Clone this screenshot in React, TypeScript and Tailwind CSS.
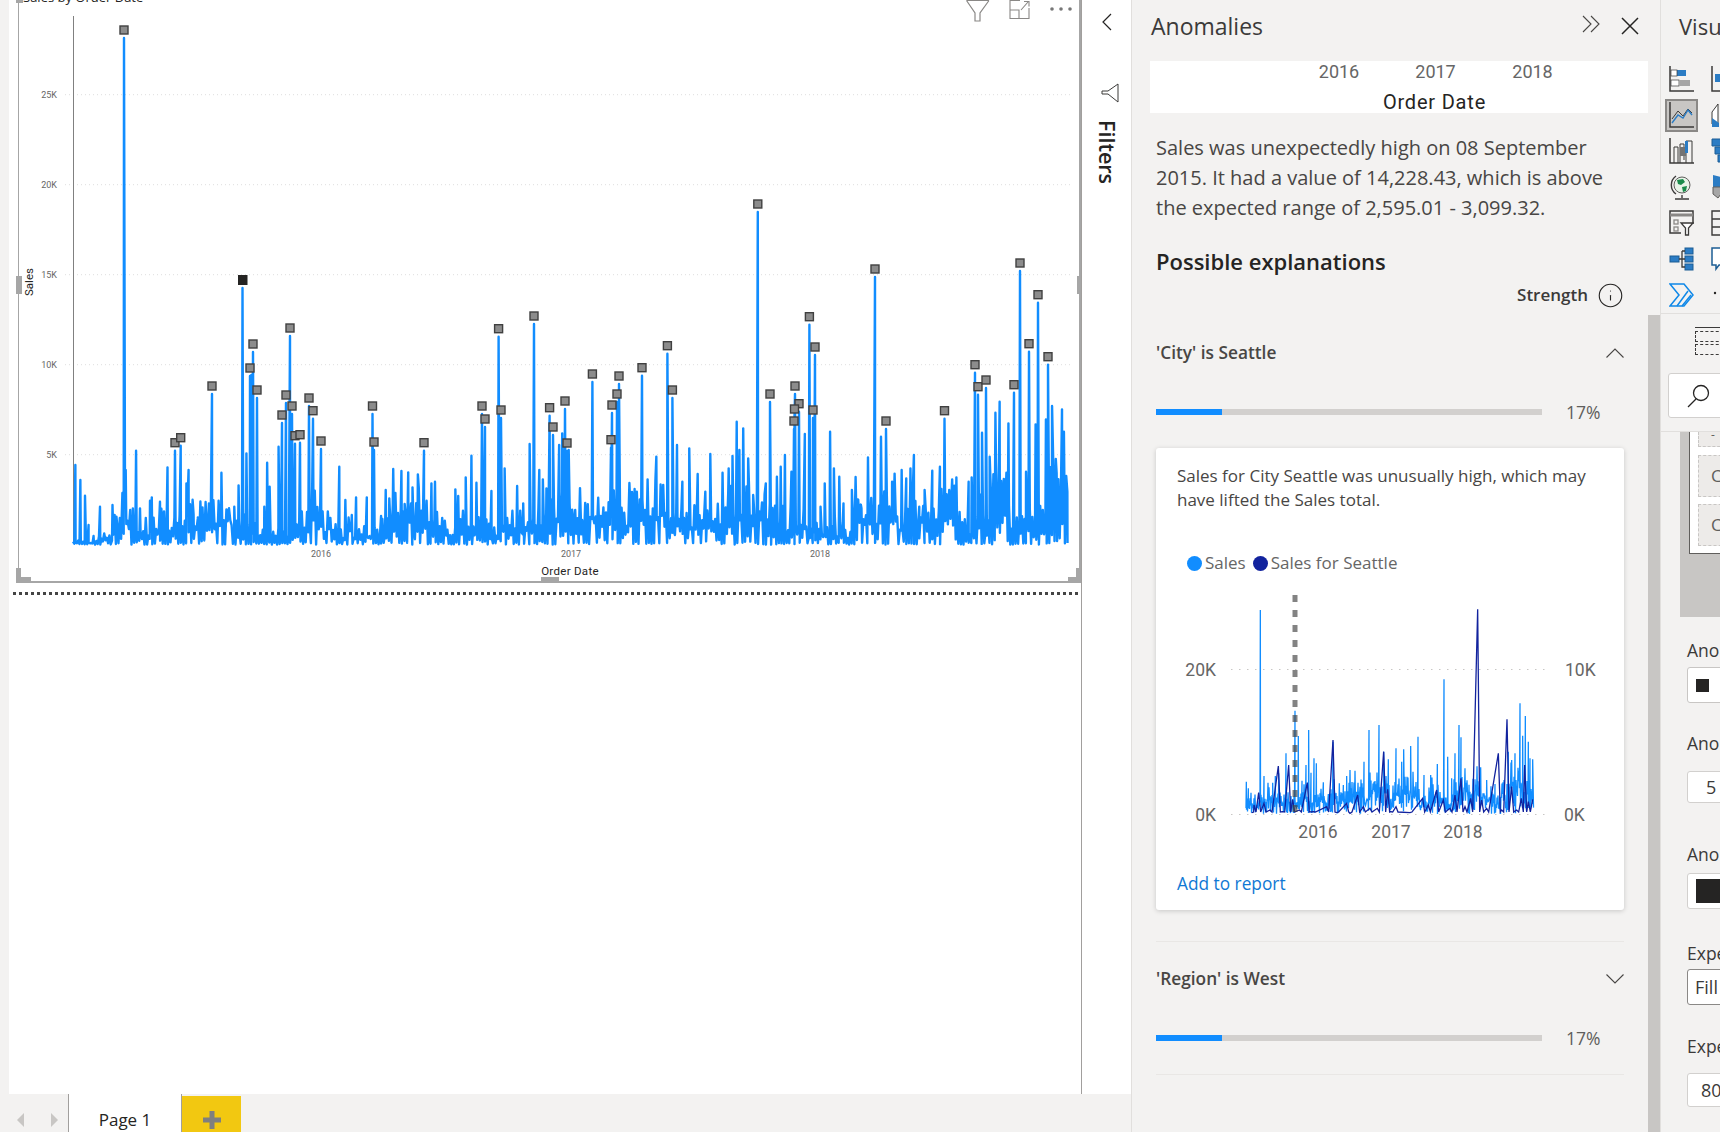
import { Info } from 'lucide-react';

type Pt = [number, number];

const BLUE = '#118dff';
const NAVY = '#12239e';

// main chart: 90px per 5K, baseline at y=544.7
const BASE = 544.7;

const markers: Pt[] = [
  [124, 30], [175, 442.7], [180.7, 437.7], [212, 386], [253, 344], [250, 368], [257, 390], [290, 328], [286, 395],
  [292, 406], [282, 415], [309, 398], [313, 410.7], [295, 435.7], [300, 434.7], [321, 441], [372.5, 406], [374, 442],
  [424, 442.7], [482, 406], [485, 419], [498.6, 328.7], [501, 410], [534, 316], [549.6, 407.7], [553, 427], [565, 401],
  [567, 443], [592.4, 374], [611, 439.7], [612, 405], [617, 394], [619, 376], [642, 367.7], [667.4, 345.7], [672.4, 390],
  [757.8, 204], [770, 394], [795, 386], [799, 403.7], [794.5, 409], [794, 421], [809.4, 316.7], [813, 410], [815, 347],
  [875, 269], [886, 421], [944.5, 410.7], [975, 364.7], [978, 386.7], [986, 380], [1014, 384.7], [1020, 263], [1029, 343.7],
  [1038, 294.7], [1048, 356.7],
];

// peaks read off the left half of the plot
const leftPeaks: Pt[] = [
  [211, 525], [225, 570], [238, 617], [248, 705], [262, 738], [280, 650], [315, 645], [326, 680], [352, 540], [381, 482], [372, 655],
  [392, 655], [420, 632], [425, 622], [448, 635], [469, 532], [522, 580], [528, 540], [542, 672], [554, 682], [567, 652],
  [585, 640], [620, 548], [612, 640], [640, 660], [656, 650], [668, 586], [690, 490], [704, 255], [748, 518], [755, 590],
  [740, 650], [780, 470], [950, 530], [967, 630], [985, 675], [997, 622], [1027, 622], [1067, 678], [1080, 600], [1090, 625],
  [1101, 537], [1124, 543], [1133, 642], [1143, 547], [1155, 592], [1170, 553], [1208, 580], [1218, 575], [1275, 598], [1283, 618],
  [1304, 562], [1320, 497], [1334, 578], [1376, 603], [1413, 535], [1448, 588], [1465, 640], [1483, 462], [1510, 540], [1520, 568],
  [1530, 595],
];

// and the right half
const rightPeaks: Pt[] = [
  [50, 465], [58, 430], [75, 480], [92, 660], [110, 690], [119, 668], [150, 685], [171, 680], [235, 618], [242, 645], [253, 605],
  [283, 670], [304, 500], [358, 465], [372, 575], [390, 475], [412, 552], [432, 605], [445, 492], [477, 548], [493, 535], [503, 498],
  [514, 395], [521, 480], [531, 415], [544, 505], [557, 615], [590, 580], [619, 560], [629, 530], [640, 495], [657, 545], [692, 432],
  [733, 650], [744, 580], [758, 425], [768, 535], [782, 560], [793, 640], [815, 600], [830, 628], [840, 655], [857, 502], [891, 440],
  [920, 575], [945, 540], [957, 565], [968, 535], [977, 495], [991, 650], [1005, 600], [1025, 542], [1045, 530], [1077, 568], [1088, 562],
  [1120, 575], [1128, 562], [1155, 428], [1175, 500], [1190, 368], [1201, 335], [1224, 400], [1270, 545], [1295, 403], [1322, 388],
  [1338, 348], [1350, 550], [1364, 358], [1369, 425], [1378, 605],
];

const miniBlue: Pt[] = [
  [199, 575], [205, 595], [222, 625], [241, 60], [252, 558], [265, 615], [278, 578], [286, 558], [296, 550], [318, 490], [345, 362], [355, 438],
  [366, 572], [378, 525], [386, 420], [393, 548], [402, 505], [409, 520], [430, 577], [445, 612], [459, 455], [478, 580], [490, 585], [500, 558],
  [512, 595], [530, 605], [540, 590], [552, 515], [567, 420], [580, 590], [597, 405], [611, 485], [625, 508], [648, 475], [665, 515], [671, 478],
  [692, 468], [714, 440], [732, 555], [752, 555], [772, 522], [792, 268], [803, 500], [815, 565], [825, 490], [837, 405], [843, 442], [855, 535],
  [870, 605], [885, 568], [902, 532], [920, 570], [945, 582], [970, 590], [985, 485], [995, 510], [1005, 490], [1020, 340], [1028, 437], [1036, 378],
  [1045, 455], [1050, 505], [1058, 508],
];

const miniNavy: Pt[] = [
  [215, 668], [222, 645], [236, 608], [252, 640], [270, 660], [295, 528], [308, 665], [326, 525], [338, 628], [358, 660], [382, 578], [400, 665],
  [440, 650], [459, 450], [470, 668], [500, 640], [510, 670], [533, 615], [550, 650], [570, 655], [592, 655], [611, 485], [623, 598], [632, 665],
  [648, 650], [690, 668], [728, 625], [745, 645], [770, 600], [790, 630], [810, 655], [825, 615], [843, 565], [855, 650], [872, 625], [893, 58],
  [905, 630], [920, 655], [955, 490], [965, 660], [981, 388], [995, 590], [1010, 660], [1024, 625], [1034, 525], [1045, 635], [1058, 628],
];

function rng(seed: number) {
  let s = seed;
  return () => {
    s = (s * 16807) % 2147483647;
    return s / 2147483647;
  };
}

function mainAmp(x: number) {
  if (x < 112) return 12;
  if (x < 300) return 62;
  if (x < 960) return 72;
  return 115;
}

function buildMain() {
  const r = rng(4711);
  const peaks: Pt[] = [
    ...markers.map(([x, y]): Pt => [x, y + 8]),
    [242.5, 288],
    ...leftPeaks.map(([x, y]): Pt => [x / 2.8, 290 + y / 3]),
    ...rightPeaks.map(([x, y]): Pt => [540 + x / 2.613, 290 + y / 3]),
  ];
  const pts: Pt[] = peaks.filter(([x]) => x > 70 && x < 1069);
  let flip = false;
  let burst = 0.5;
  for (let x = 73; x < 1068; x += 1.3) {
    flip = !flip;
    burst = Math.min(1, Math.max(0.25, burst + (r() - 0.5) * 0.35));
    const a = mainAmp(x);
    let v = a * burst * (0.35 + 0.65 * Math.pow(r(), 1.2));
    if (!flip) v = r() < 0.4 ? r() * 2 : a * burst * 0.4 * r();
    pts.push([x, BASE - v]);
  }
  pts.sort((p, q) => p[0] - q[0]);
  return pts.map((p) => p.join(',')).join(' ');
}

function buildMini() {
  const r = rng(99);
  const pts: Pt[] = miniBlue.map(([x, y]): Pt => [1180 + x / 3, 590 + y / 3]);
  let flip = false;
  let burst = 0.6;
  for (let x = 1246; x < 1534; x += 0.5) {
    flip = !flip;
    burst = Math.min(1, Math.max(0.35, burst + (r() - 0.5) * 0.3));
    const a = x > 1500 ? 75 : x < 1300 ? 32 : 50;
    pts.push([x, 814 - (flip ? a * burst * (0.4 + 0.6 * Math.pow(r(), 1.1)) : a * burst * 0.6 * r())]);
  }
  pts.sort((p, q) => p[0] - q[0]);
  return pts.map((p) => p.join(',')).join(' ');
}

function buildNavy() {
  const pts: Pt[] = [];
  miniNavy.forEach(([x, y], i) => {
    pts.push([1180 + x / 3, 590 + y / 3]);
    if (i < miniNavy.length - 1) pts.push([1180 + (x + 6) / 3, 812]);
  });
  return pts.map((p) => p.join(',')).join(' ');
}

const mainLine = buildMain();
const miniLine = buildMini();
const navyLine = buildNavy();

function MainChart() {
  const din = { fontFamily: 'Roboto, sans-serif' };
  return (
    <svg width="1060" height="581" viewBox="19 0 1060 581" className="block">
      <text x="23" y="2" fontSize="13" fill="#252423" style={{ fontFamily: 'Open Sans, sans-serif' }}>Sales by Order Date</text>
      {[94.7, 184.7, 274.7, 364.7, 454.7].map((y) => (
        <line key={y} x1="65" x2="1072" y1={y} y2={y} stroke="#dedede" strokeDasharray="1 3" />
      ))}
      {[['25K', 94.7], ['20K', 184.7], ['15K', 274.7], ['10K', 364.7], ['5K', 454.7]].map(([t, y]) => (
        <text key={t} x="57" y={Number(y) + 3} textAnchor="end" fontSize="9" fill="#666666" style={din}>{t}</text>
      ))}
      <line x1="73.5" x2="73.5" y1="16" y2="544" stroke="#808080" />
      <polyline points={mainLine} fill="none" stroke={BLUE} strokeWidth="2.4" strokeLinejoin="round" />
      {markers.map(([x, y]) => (
        <rect key={`${x}-${y}`} x={x - 4} y={y - 4} width="8" height="8" fill="#8c8c8c" stroke="#404040" strokeWidth="1.4" />
      ))}
      <rect x="238" y="275" width="9.5" height="10" fill="#252423" />
      <text x="321" y="557" textAnchor="middle" fontSize="9" fill="#666666" style={din}>2016</text>
      <text x="571" y="557" textAnchor="middle" fontSize="9" fill="#666666" style={din}>2017</text>
      <text x="820" y="557" textAnchor="middle" fontSize="9" fill="#666666" style={din}>2018</text>
      <text x="570" y="575" textAnchor="middle" fontSize="11.5" letterSpacing="0.3" fill="#252423" style={din}>Order Date</text>
      <text transform="translate(33 296) rotate(-90)" fontSize="11.5" fill="#252423" style={din}>Sales</text>
    </svg>
  );
}

function MiniChart() {
  const din = { fontFamily: 'Roboto, sans-serif' };
  return (
    <svg width="468" height="260" viewBox="1156 590 468 260" className="block">
      <line x1="1231" x2="1550" y1="669.5" y2="669.5" stroke="#c8c6c4" strokeDasharray="1.5 6.5" />
      <line x1="1231" x2="1550" y1="814.5" y2="814.5" stroke="#c8c6c4" strokeDasharray="1.5 6.5" />
      <polyline points={miniLine} fill="none" stroke={BLUE} strokeWidth="1.3" />
      <polyline points={navyLine} fill="none" stroke={NAVY} strokeWidth="1.3" />
      <line x1="1295" x2="1295" y1="595" y2="814" stroke="#404040" strokeOpacity="0.65" strokeWidth="5" strokeDasharray="7 8" />
      <text x="1216" y="676" textAnchor="end" fontSize="17.5" fill="#666666" style={din}>20K</text>
      <text x="1216" y="821" textAnchor="end" fontSize="17.5" fill="#666666" style={din}>0K</text>
      <text x="1565" y="676" fontSize="17.5" fill="#666666" style={din}>10K</text>
      <text x="1564" y="821" fontSize="17.5" fill="#666666" style={din}>0K</text>
      <text x="1318" y="838" textAnchor="middle" fontSize="17.5" fill="#666666" style={din}>2016</text>
      <text x="1391" y="838" textAnchor="middle" fontSize="17.5" fill="#666666" style={din}>2017</text>
      <text x="1463" y="838" textAnchor="middle" fontSize="17.5" fill="#666666" style={din}>2018</text>
    </svg>
  );
}

function Bar() {
  return (
    <div className="mt-[31px] flex h-[24px] items-center">
      <div className="h-[6px] w-[386px] bg-[#d2d0ce]">
        <div className="h-[6px] w-[66px] bg-[#118dff]" />
      </div>
      <span className="ml-[24px] text-[17.5px] text-[#605e5c]">17%</span>
    </div>
  );
}

function Chevron({ up }: { up?: boolean }) {
  return (
    <svg width="18" height="10" viewBox="0 0 18 10" fill="none" stroke="#484644" strokeWidth="1.1">
      <path d={up ? 'M0.5 9.5L9 1l8.5 8.5' : 'M0.5 0.5L9 9l8.5-8.5'} />
    </svg>
  );
}

// the narrow column of visual icons; the second column is clipped by the window
const ink = '#3b3a39';
const iconBlue = '#2b7cc4';

function IconBarChart() {
  return (
    <svg width="25" height="26" viewBox="0 0 25 26" fill="none">
      <path d="M1 0v25h24" stroke={ink} strokeWidth="1.5" />
      <rect x="8" y="4" width="9" height="6" fill={iconBlue} />
      <rect x="2" y="4" width="6" height="6" fill="#fff" stroke={ink} strokeWidth="0.7" />
      <rect x="2" y="14" width="8" height="6" fill="#fff" stroke={ink} strokeWidth="0.7" />
      <rect x="10" y="14" width="11" height="6" fill="#a6a6a6" />
    </svg>
  );
}

function IconLine() {
  return (
    <svg width="25" height="26" viewBox="0 0 25 26" fill="none">
      <path d="M1 0v25h24" stroke={ink} strokeWidth="1.5" />
      <path d="M3 17l6-8 5 5 5-7 4 4" stroke={ink} strokeWidth="1" />
      <path d="M3 21l6-8 5 3 5-8 4 5" stroke={iconBlue} strokeWidth="1.4" />
    </svg>
  );
}

function IconRibbon() {
  return (
    <svg width="25" height="26" viewBox="0 0 25 26" fill="none">
      <path d="M1 0v25h24" stroke={ink} strokeWidth="1.5" />
      <path d="M5 25V9h4v16M11 25V6h4v16M17 25V3h6v22" stroke={ink} strokeWidth="1" />
      <rect x="11" y="9" width="6" height="9" fill="#737373" />
      <rect x="16" y="3" width="3" height="12" fill={iconBlue} />
    </svg>
  );
}

function IconGlobe() {
  return (
    <svg width="25" height="26" viewBox="0 0 25 26" fill="none">
      <circle cx="13" cy="11" r="8" fill="#e8f3e8" stroke="#605e5c" />
      <path d="M8 6l6-1 2 3-4 3-3-1zM13 13l5-1-1 5-3 1z" fill="#1a8a4a" />
      <path d="M7 2a11 11 0 0 0 0 18" stroke={ink} strokeWidth="1.4" />
      <path d="M13 21v3M6 25h14" stroke={ink} strokeWidth="1.4" />
    </svg>
  );
}

function IconSlicer() {
  return (
    <svg width="25" height="26" viewBox="0 0 25 26" fill="none">
      <path d="M24 14V1H1v22h11" stroke={ink} strokeWidth="1.5" />
      <path d="M1 5h23" stroke="#8a8886" strokeWidth="3" />
      <rect x="5" y="10" width="4" height="4" stroke="#8a8886" strokeWidth="1.3" />
      <rect x="5" y="17" width="4" height="4" stroke="#8a8886" strokeWidth="1.3" />
      <path d="M12 13h12l-4.500 5v7h-3v-7z" fill="#fff" stroke={ink} strokeWidth="1.3" />
    </svg>
  );
}

function IconTree() {
  return (
    <svg width="25" height="26" viewBox="0 0 25 26" fill="none">
      <rect x="1" y="10" width="9" height="6" fill={iconBlue} stroke="#1c5d94" />
      <rect x="16" y="2" width="8" height="6" fill={iconBlue} stroke="#1c5d94" />
      <rect x="16" y="10" width="8" height="6" fill={iconBlue} stroke="#1c5d94" />
      <rect x="16" y="18" width="8" height="6" fill={iconBlue} stroke="#1c5d94" />
      <path d="M10 13h6M13 5v16h3M13 5h3" stroke={ink} strokeWidth="1.3" />
    </svg>
  );
}

function IconAutomate() {
  return (
    <svg width="25" height="26" viewBox="0 0 25 26" fill="none" stroke="#0f88e8" strokeWidth="1.5">
      <path d="M1 2h14l9 11-9 11H1l9-11z" />
      <path d="M8 24L19 9M13 24L22 13" />
    </svg>
  );
}

function Clip2({ kind }: { kind: number }) {
  const paths = [
    <g key="0"><path d="M1 0v25h24" stroke={ink} strokeWidth="1.5" fill="none" /><rect x="4" y="8" width="6" height="8" fill={iconBlue} /></g>,
    <g key="1"><path d="M1 10l6-8v20H1z" fill="#fff" stroke={ink} /><path d="M1 16l7 5v4H1z" fill={iconBlue} /></g>,
    <path key="2" d="M1 1h10v7H1zM4 9h8v7H4zM7 17h6v7H7z" fill={iconBlue} stroke="#1c5d94" />,
    <g key="3"><path d="M2 1l8 2v10H2z" fill={iconBlue} /><path d="M2 13h8v7l-3 4-5-4z" fill="#a6a6a6" stroke="#605e5c" /></g>,
    <path key="4" d="M1 1h24v24H1zM1 9h24M1 17h24" fill="none" stroke={ink} strokeWidth="1.4" />,
    <path key="5" d="M1 2h20v17H8l-3 4v-4H1z" fill="#fff" stroke="#1c5d94" strokeWidth="1.5" />,
    <circle key="6" cx="4" cy="11" r="1.2" fill="#252423" />,
  ];
  return (
    <svg width="25" height="26" viewBox="0 0 25 26" className="shrink-0">
      {paths[kind]}
    </svg>
  );
}

const iconRows = [IconBarChart, IconLine, IconRibbon, IconGlobe, IconSlicer, IconTree, IconAutomate];

function FieldBox({ label }: { label: string }) {
  return (
    <div className="flex h-[42px] w-[60px] items-center border border-dashed border-[#c8c6c4] bg-[#edebe9] pl-[12px] text-[17px] text-[#605e5c]">
      {label}
    </div>
  );
}

function VisualizationsPane() {
  return (
    <div className="flex h-full w-[60px] flex-col overflow-hidden border-l border-[#e1dfdd] bg-[#f3f2f1] text-[#3b3a39]">
      <div className="flex h-[52px] w-[200px] shrink-0 items-center pl-[18px] text-[22px] font-medium whitespace-nowrap">
        Visualizations
      </div>
      <div className="mt-[9px] flex w-[120px] shrink-0 flex-col">
        {iconRows.map((Icon, i) => (
          <div key={i} className="flex h-[36px] items-center pl-[4px]">
            <div className={`flex h-[33px] w-[33px] items-center justify-center ${i === 1 ? 'border-2 border-[#8a8886] bg-[#c8c6c4]' : ''}`}>
              <Icon />
            </div>
            <div className="ml-[13px]">
              <Clip2 kind={i} />
            </div>
          </div>
        ))}
      </div>
      <div className="h-[1px] w-full shrink-0 bg-[#e1dfdd]" />
      <div className="ml-[34px] mt-[13px] h-[29px] w-[60px] shrink-0 border-t border-[#3b3a39] pt-[3px]">
        <div className="h-[11px] border border-dashed border-[#3b3a39]" />
        <div className="mt-[2px] h-[11px] border border-dashed border-[#3b3a39]" />
      </div>
      <div className="ml-[7px] mt-[17px] flex h-[45px] w-[80px] shrink-0 items-center rounded-[3px] border border-[#d2d0ce] bg-white pl-[17px]">
        <svg width="24" height="24" viewBox="0 0 24 24" fill="none" stroke="#252423" strokeWidth="1.3">
          <circle cx="15" cy="9" r="7.500" />
          <path d="M10 15L2 23" />
        </svg>
      </div>
      <div className="mt-[13px] h-[1px] w-full shrink-0 bg-[#e1dfdd]" />
      <div className="ml-[19px] h-[185px] w-[60px] shrink-0 bg-[#c8c6c4] pl-[9px]">
        <div className="h-[122px] w-[60px] border-b border-l border-[#605e5c] bg-white pl-[8px]">
          <div className="h-[15px] border border-t-0 border-dashed border-[#c8c6c4] bg-[#edebe9] pl-[12px] text-[12px] leading-[6px] text-[#605e5c]">-</div>
          <div className="mt-[8px]"><FieldBox label="C" /></div>
          <div className="mt-[7px]"><FieldBox label="C" /></div>
        </div>
      </div>
      <div className="ml-[26px] mt-[22px] shrink-0 text-[17.5px] leading-[22px]">Anomaly</div>
      <div className="ml-[26px] mt-[6px] flex h-[36px] w-[60px] shrink-0 items-center rounded-[3px] border border-[#c8c6c4] bg-white pl-[8px]">
        <div className="h-[13px] w-[13px] bg-[#252423]" />
      </div>
      <div className="ml-[26px] mt-[29px] shrink-0 text-[17.5px] leading-[22px]">Anomaly</div>
      <div className="ml-[26px] mt-[17px] flex h-[32px] w-[60px] shrink-0 items-center rounded-[3px] border border-[#d2d0ce] bg-white pl-[18px] text-[18px]">5</div>
      <div className="ml-[26px] mt-[40px] shrink-0 text-[17.5px] leading-[22px]">Anomaly</div>
      <div className="ml-[26px] mt-[8px] flex h-[36px] w-[60px] shrink-0 items-center rounded-[3px] border border-[#d2d0ce] bg-white pl-[8px]">
        <div className="h-[24px] w-[30px] bg-[#252423]" />
      </div>
      <div className="ml-[26px] mt-[33px] shrink-0 text-[17.5px] leading-[22px]">Expected</div>
      <div className="ml-[26px] mt-[5px] flex h-[36px] w-[60px] shrink-0 items-center rounded-[3px] border border-[#8a8886] bg-white pl-[7px] text-[18px]">Fill</div>
      <div className="ml-[26px] mt-[30px] shrink-0 text-[17.5px] leading-[22px]">Expected</div>
      <div className="ml-[26px] mt-[16px] flex h-[34px] w-[60px] shrink-0 items-center rounded-[3px] border border-[#d2d0ce] bg-white pl-[13px] text-[18px]">80</div>
    </div>
  );
}

function AnomaliesPane() {
  return (
    <div className="flex h-full w-[529px] border-l border-[#e1dfdd] bg-[#f3f2f1]">
      <div className="w-[516px]">
        <div className="flex h-[54px] items-center pl-[19px]">
          <span className="-mt-[2px] w-[431px] text-[23px] font-medium text-[#3b3a39]">Anomalies</span>
          <svg width="18" height="18" viewBox="0 0 18 18" fill="none" stroke="#484644" strokeWidth="1.1" className="-mt-[7px]">
            <path d="M1 1l8 8-8 8M9 1l8 8-8 8" />
          </svg>
          <svg width="18" height="18" viewBox="0 0 18 18" fill="none" stroke="#252423" strokeWidth="1.5" className="-mt-[2px] ml-[21px]">
            <path d="M1 1l16 16M17 1L1 17" />
          </svg>
        </div>
        <div className="mt-[7px] ml-[18px] h-[52px] w-[498px] bg-white font-['Roboto',sans-serif]">
          <div className="flex pl-[141px] text-[18px] leading-[22px] text-[#666666]">
            <span className="w-[96px] text-center">2016</span>
            <span className="w-[97px] text-center">2017</span>
            <span className="w-[97px] text-center">2018</span>
          </div>
          <div className="mt-[7px] pl-[71px] text-center text-[20px] leading-[24px] tracking-[0.8px] text-[#252423]">Order Date</div>
        </div>
        <p className="mt-[20px] ml-[24px] text-[20px] leading-[30px] text-[#484644]">
          Sales was unexpectedly high on 08 September
          <br />
          2015. It had a value of 14,228.43, which is above
          <br />
          the expected range of 2,595.01 - 3,099.32.
        </p>
        <h2 className="mt-[18px] ml-[24px] h-[41px] text-[22px] leading-[40px] font-semibold text-[#252423]">Possible explanations</h2>
        <div className="flex h-[26px] items-center justify-end pr-[24px]">
          <span className="text-[17px] font-semibold text-[#3b3a39]">Strength</span>
          <Info size={27} strokeWidth={1} color="#252423" className="ml-[9px]" />
        </div>
        <div className="mt-[28px] ml-[24px] w-[468px]">
          <div className="flex h-[33px] items-center justify-between">
            <span className="text-[17.3px] font-semibold text-[#484644]">'City' is Seattle</span>
            <Chevron up />
          </div>
          <Bar />
          <div className="mt-[24px] h-[462px] w-[468px] rounded-[3px] bg-white shadow-[0_1px_5px_rgba(0,0,0,0.18)]">
            <p className="pt-[16px] pl-[21px] text-[17px] leading-[24px] text-[#484644]">
              Sales for City Seattle was unusually high, which may
              <br />
              have lifted the Sales total.
            </p>
            <div className="mt-[39px] flex h-[24px] items-center pl-[31px] text-[17px] text-[#666666]">
              <span className="h-[15px] w-[15px] rounded-full bg-[#118dff]" />
              <span className="ml-[3px]">Sales</span>
              <span className="ml-[7px] h-[15px] w-[15px] rounded-full bg-[#12239e]" />
              <span className="ml-[3px]">Sales for Seattle</span>
            </div>
            <div className="mt-[15px]">
              <MiniChart />
            </div>
            <div className="mt-[22px] pl-[21px] text-[17.3px] leading-[24px] text-[#0f78d4]">Add to report</div>
          </div>
          <div className="mt-[31px] h-[1px] bg-[#e9e7e5]" />
          <div className="mt-[21px] flex h-[32px] items-center justify-between">
            <span className="text-[17.3px] font-semibold text-[#484644]">'Region' is West</span>
            <Chevron />
          </div>
          <Bar />
          <div className="mt-[24px] h-[1px] bg-[#e9e7e5]" />
        </div>
      </div>
      <div className="mt-[315px] w-[12px] bg-[#c8c6c4]" />
    </div>
  );
}

function FilterPane() {
  return (
    <div className="flex w-[49px] flex-col items-start bg-white pl-[14px]">
      <svg width="12" height="18" viewBox="0 0 12 18" fill="none" stroke="#252423" strokeWidth="1.2" className="mt-[13px] ml-[5px]">
        <path d="M10 1L2 9l8 8" />
      </svg>
      <svg width="18" height="20" viewBox="0 0 18 20" fill="none" stroke="#3b3a39" strokeWidth="1" className="mt-[52px] ml-[5px]">
        <path d="M17 1v18L7 11H1V8h6z" />
      </svg>
      <span className="mt-[17px] font-semibold text-[21.5px] leading-[22px] text-[#252423] [writing-mode:vertical-rl]">Filters</span>
    </div>
  );
}

export default function App() {
  return (
    <div className="flex h-[1132px] w-[1720px] overflow-hidden bg-white font-['Open_Sans',sans-serif]">
      <div className="flex h-full w-[1131px] flex-col">
        <div className="flex h-[1094px]">
          <div className="w-[9px] bg-[#f3f2f1]" />
          <div className="w-[1073px] border-r border-[#a19f9d] bg-white">
            <div className="relative ml-[9px] h-[583px] w-[1063px] border-r-2 border-b-2 border-l border-[#a6a6a6]">
              <MainChart />
              <div className="absolute top-0 -left-[3px] h-[3px] w-[7px] bg-[#a6a6a6]" />
              <div className="absolute top-[276px] -left-[3px] h-[18px] w-[6px] bg-[#a6a6a6]" />
              <div className="absolute top-[276px] -right-[2px] h-[18px] w-[4px] bg-[#a6a6a6]" />
              <div className="absolute -bottom-[2px] -left-[3px] h-[15px] w-[5px] bg-[#a6a6a6]" />
              <div className="absolute -bottom-[2px] -left-[3px] h-[6px] w-[15px] bg-[#a6a6a6]" />
              <div className="absolute -right-[2px] -bottom-[2px] h-[15px] w-[5px] bg-[#a6a6a6]" />
              <div className="absolute -right-[2px] -bottom-[2px] h-[6px] w-[13px] bg-[#a6a6a6]" />
              <div className="absolute -bottom-[2px] left-[522px] h-[6px] w-[18px] bg-[#a6a6a6]" />
              <svg width="108" height="22" viewBox="0 0 108 22" fill="none" className="absolute top-0 left-[947px]">
                <path d="M0.500 0.500H23M0.500 0.500L9 13v8h5v-8L23 0.500" stroke="#8a8886" strokeWidth="1.2" />
                <path d="M63 8V18.500H44V0.500h10M44 10h9v8.500M55 10l7-8M58 1.500h5v5" stroke="#8a8886" strokeWidth="1.1" />
                <circle cx="86" cy="9" r="1.800" fill="#777777" />
                <circle cx="95" cy="9" r="1.800" fill="#777777" />
                <circle cx="104" cy="9" r="1.800" fill="#777777" />
              </svg>
            </div>
            <div className="mt-[9px] ml-[4px] h-[3px] w-[1066px] bg-[repeating-linear-gradient(90deg,#444444_0_3px,transparent_3px_6px)]" />
          </div>
          <FilterPane />
        </div>
        <div className="flex h-[38px] bg-[#f3f2f1] pl-[9px]">
          <div className="flex w-[59px] items-start gap-[27px] pt-[19px] pl-[8px]">
            <div className="h-0 w-0 border-y-[7px] border-r-[7px] border-y-transparent border-r-[#c8c6c4]" />
            <div className="h-0 w-0 border-y-[7px] border-l-[7px] border-y-transparent border-l-[#c8c6c4]" />
          </div>
          <div className="flex w-[114px] justify-center border-x border-[#a19f9d] bg-white pt-[14px] text-[17px] leading-[24px] text-[#252423]">Page 1</div>
          <div className="mt-[2px] flex h-[36px] w-[59px] items-center justify-center bg-[#f2c811]">
            <svg width="18" height="18" viewBox="0 0 18 18" fill="#7f7f7f" className="mt-[12px]">
              <path d="M6.500 0h5v6.500H18v5h-6.500V18h-5v-6.500H0v-5h6.500z" />
            </svg>
          </div>
        </div>
      </div>
      <AnomaliesPane />
      <VisualizationsPane />
    </div>
  );
}
